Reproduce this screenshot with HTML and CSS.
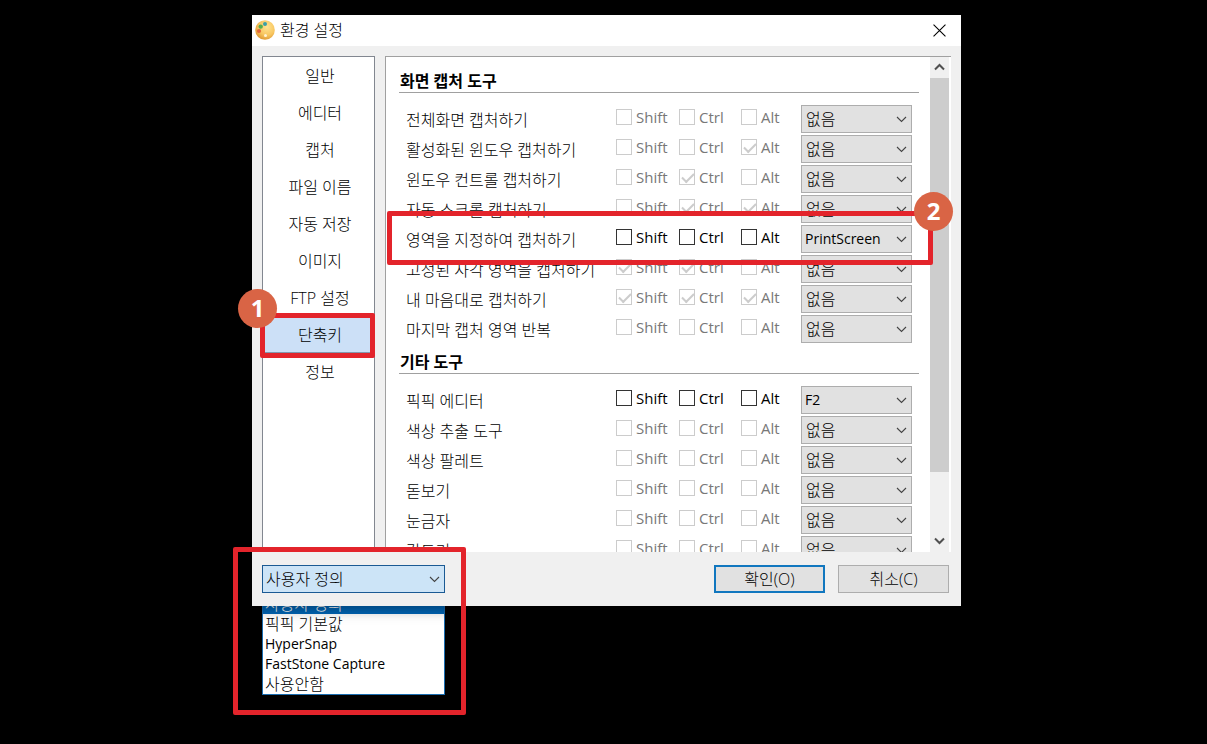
FILE: index.html
```html
<!DOCTYPE html>
<html lang="ko">
<head>
<meta charset="utf-8">
<title>환경 설정</title>
<link rel="stylesheet" href="styles.css">
</head>
<body>

<svg class="defs" width="0" height="0" aria-hidden="true">
  <symbol id="chevron" viewBox="0 0 11 7"><path d="M1 1 L5.5 5.5 L10 1" fill="none" stroke="#444" stroke-width="1.1"/></symbol>
</svg>

<div class="dialog">
  <div class="window">
    <header class="titlebar">
      <svg class="logo" viewBox="0 0 20 20" aria-hidden="true">
        <defs>
          <radialGradient id="gold" cx="0.6" cy="0.35" r="0.7">
            <stop offset="0" stop-color="#ffe391"/>
            <stop offset="0.6" stop-color="#f8c660"/>
            <stop offset="1" stop-color="#dc942f"/>
          </radialGradient>
        </defs>
        <circle cx="10" cy="10" r="9.8" fill="url(#gold)"/>
        <circle cx="10.5" cy="15.5" r="1.5" fill="#fff3d5"/>
        <circle cx="10" cy="4" r="2" fill="#3a9fa8"/>
        <circle cx="5.7" cy="6.6" r="2.2" fill="#58ad4d"/>
        <circle cx="4" cy="11" r="2.1" fill="#e2653a"/>
      </svg>
      <h1>환경 설정</h1>
      <button class="close" aria-label="닫기">
        <svg viewBox="0 0 12 12"><path d="M0.5 0.5 L11.5 11.5 M11.5 0.5 L0.5 11.5" stroke="#000" stroke-width="1"/></svg>
      </button>
    </header>

    <main class="main">
      <nav class="menu">
        <a href="#">일반</a>
        <a href="#">에디터</a>
        <a href="#">캡처</a>
        <a href="#">파일 이름</a>
        <a href="#">자동 저장</a>
        <a href="#">이미지</a>
        <a href="#">FTP 설정</a>
        <a href="#" class="on">단축키</a>
        <a href="#">정보</a>
      </nav>
      <div class="panel">
        <div class="content">
          <h2>화면 캡처 도구</h2>
          <div class="rows" id="capture"></div>
          <h2>기타 도구</h2>
          <div class="rows" id="etc"></div>
        </div>
        <div class="scrollbar">
          <svg viewBox="0 0 11 8"><path d="M1 6.5 L5.5 2 L10 6.5" fill="none" stroke="#505050" stroke-width="2"/></svg>
          <div class="thumb"></div>
          <svg viewBox="0 0 11 8"><path d="M1 1.5 L5.5 6 L10 1.5" fill="none" stroke="#505050" stroke-width="2"/></svg>
        </div>
      </div>
    </main>

    <footer class="footer">
      <div class="combo preset">
        <select aria-label="단축키 설정">
          <option>사용자 정의</option>
        </select>
        <svg><use href="#chevron"/></svg>
      </div>
      <button class="btn ok">확인(O)</button>
      <button class="btn">취소(C)</button>
    </footer>
  </div>

  <ul class="list">
    <li class="on">사용자 정의</li>
    <li>픽픽 기본값</li>
    <li class="latin">HyperSnap</li>
    <li class="latin">FastStone Capture</li>
    <li>사용안함</li>
  </ul>

  <div class="mark mark-menu"></div>
  <div class="mark mark-row"></div>
  <div class="mark mark-list"></div>
  <span class="badge badge-1">1</span>
  <span class="badge badge-2">2</span>
</div>

<script src="script.js"></script>
</body>
</html>
```
FILE: styles.css
```css
* { box-sizing: border-box; }

body {
  min-height: 100vh;
  margin: 0;
  padding: 15px 246px 0 252px;
  background: #000;
  color: #000;
  font-family: "Open Sans", "Noto Sans CJK KR", sans-serif;
  font-size: 16px;
  font-weight: 300;
  line-height: 20px;
}

button, select { font: inherit; color: inherit; }

.defs { display: block; height: 0; }

.dialog { position: relative; min-width: 620px; }

.window {
  position: relative;
  z-index: 1;
  background: #f0f0f0;
  box-shadow: 0 4px 12px rgba(0, 0, 0, 0.35);
}

/* title bar */
.titlebar {
  display: flex;
  align-items: center;
  height: 31px;
  padding: 0 15px 1px 3px;
  background: #fff;
}
.logo { width: 20px; height: 20px; }
.titlebar h1 {
  flex: 1;
  margin: 0 0 0 5px;
  font-size: 16px;
  font-weight: inherit;
}
.close {
  display: flex;
  padding: 0;
  border: 0;
  background: none;
}
.close svg { width: 13px; height: 13px; }

/* menu and panel */
.main {
  display: flex;
  gap: 10px;
  height: 506px;
  padding: 10px 10px 0;
}
.menu {
  width: 113px;
  border: 1px solid #828790;
  background: #fff;
}
.menu a {
  display: flex;
  align-items: center;
  justify-content: center;
  height: 37px;
  padding-left: 3px;
  border: 1px solid transparent;
  color: inherit;
  text-decoration: none;
}
.menu a.on {
  border-color: #8497ad;
  background: #cce0f7;
}
.panel {
  display: flex;
  flex: 1;
  overflow: hidden;
  border: solid #a0a0a0;
  border-width: 1px 0 0 1px;
  background: #fff;
}
.content {
  flex: 1;
  padding: 13px 11px 0 13px;
}
.content h2 {
  margin: 0 0 12px;
  padding-left: 1px;
  border-bottom: 1px solid #a0a0a0;
  font-size: 16px;
  font-weight: bold;
  line-height: 22px;
}
.rows { margin-bottom: 8px; }
.row {
  display: grid;
  grid-template-columns: 1fr 63px 62px 60px 111px;
  align-items: center;
  height: 28px;
  margin-bottom: 2px;
  padding: 0 7px;
}
.name { padding-top: 2px; }

.check {
  display: flex;
  align-items: center;
  gap: 4px;
  padding-bottom: 4px;
  font-size: 15px;
  font-weight: normal;
}
.check input {
  appearance: none;
  width: 16px;
  height: 16px;
  margin: 0;
  border: 1px solid #333;
  background: #fff;
}
.check input:disabled { border-color: #ccc; }
.check input:disabled + span { color: #787878; }
.check input:checked::before {
  content: "";
  display: block;
  width: 10px;
  height: 5px;
  margin: 3px 2px;
  border: solid #ccc;
  border-width: 0 0 2px 2px;
  transform: rotate(-45deg);
}

.combo { position: relative; }
.combo select {
  display: block;
  appearance: none;
  width: 100%;
  height: 28px;
  padding: 0 20px 0 4px;
  border: 1px solid #adadad;
  border-radius: 0;
  background: #e1e1e1;
}
.combo .latin { padding-left: 3px; }
.latin, .combo .latin { font-size: 14px; font-weight: normal; }
.combo svg {
  position: absolute;
  top: 11px;
  right: 5px;
  width: 11px;
  height: 7px;
}

.scrollbar {
  display: flex;
  flex-direction: column;
  align-items: center;
  justify-content: space-between;
  width: 21px;
  padding: 6px 0 7px;
  border-right: 2px solid #fff;
  background: #f0f0f0;
}
.scrollbar svg { width: 11px; height: 8px; }
.scrollbar .thumb {
  width: 100%;
  height: 394px;
  margin: 7px 0 auto;
  background: #cdcdcd;
}

/* footer */
.footer {
  display: flex;
  align-items: center;
  gap: 13px;
  height: 54px;
  padding: 0 12px 0 10px;
}
.preset {
  width: 183px;
  margin-right: auto;
}
.preset select {
  padding-left: 3px;
  border-color: #1a5a94;
  background: #cce4f7;
}
.btn {
  width: 111px;
  height: 28px;
  padding: 0;
  border: 1px solid #adadad;
  background: #e1e1e1;
}
.btn.ok { border: 2px solid #1177bf; }

/* open list under the dialog */
.list {
  position: absolute;
  top: 578px;
  left: 10px;
  width: 183px;
  margin: 0;
  padding: 0;
  border: 1px solid #1a6db0;
  background: #fff;
  list-style: none;
}
.list li {
  height: 20px;
  padding: 0 2px;
}
.list .on { background: #0067b8; color: #fff; }

/* numbered notes */
.mark {
  position: absolute;
  z-index: 2;
  border: 5px solid #e3242b;
  border-radius: 2px;
}
.mark-menu { top: 298px; left: 8px; width: 115px; height: 45px; }
.mark-row { top: 196px; left: 135px; right: 28px; height: 54px; }
.mark-list { top: 532px; left: -19px; width: 233px; height: 168px; }
.badge {
  position: absolute;
  z-index: 3;
  width: 39px;
  height: 39px;
  border-radius: 50%;
  background: #d96445;
  color: #fff;
  font-size: 24px;
  font-weight: bold;
  line-height: 38px;
  text-align: center;
}
.badge-1 { top: 274px; left: -14px; }
.badge-2 { top: 177px; right: 8px; }
```
FILE: script.js
```js
// name, checked keys, key, enabled
var capture = [
  ['전체화면 캡처하기', '', '없음'],
  ['활성화된 윈도우 캡처하기', 'Alt', '없음'],
  ['윈도우 컨트롤 캡처하기', 'Ctrl', '없음'],
  ['자동 스크롤 캡처하기', 'Ctrl Alt', '없음'],
  ['영역을 지정하여 캡처하기', '', 'PrintScreen', true],
  ['고정된 사각 영역을 캡처하기', 'Shift Ctrl', '없음'],
  ['내 마음대로 캡처하기', 'Shift Ctrl Alt', '없음'],
  ['마지막 캡처 영역 반복', '', '없음']
];
var etc = [
  ['픽픽 에디터', '', 'F2', true],
  ['색상 추출 도구', '', '없음'],
  ['색상 팔레트', '', '없음'],
  ['돋보기', '', '없음'],
  ['눈금자', '', '없음'],
  ['각도기', '', '없음']
];

function row(r) {
  var checks = ['Shift', 'Ctrl', 'Alt'].map(function (k) {
    return '<label class="check"><input type="checkbox"' +
      (r[1].indexOf(k) >= 0 ? ' checked' : '') +
      (r[3] ? '' : ' disabled') + '><span>' + k + '</span></label>';
  }).join('');
  return '<div class="row" role="group" aria-label="' + r[0] + '"><span class="name">' + r[0] + '</span>' + checks +
    '<div class="combo"><select aria-label="' + r[0] + '"' + (r[3] ? ' class="latin"' : '') +
    '><option>' + r[2] + '</option></select><svg><use href="#chevron"/></svg></div></div>';
}

document.getElementById('capture').innerHTML = capture.map(row).join('');
document.getElementById('etc').innerHTML = etc.map(row).join('');
```
